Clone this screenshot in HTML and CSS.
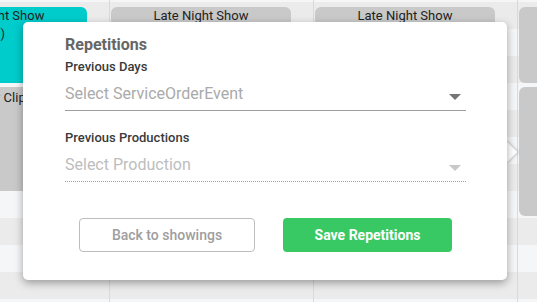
FILE: index.html
```html
<!DOCTYPE html>
<html lang="en">
<head>
    <meta charset="UTF-8">
    <meta name="viewport" content="width=device-width, initial-scale=1.0">
    <title>Repetitions</title>
    <link rel="stylesheet" href="styles.css">
</head>
<body>
    <div class="schedule">
        <div class="day first">
            <div class="show teal">
                Late Night Show<br>(1)
            </div>
            <div class="show clip">Show Clip</div>
        </div>
        <div class="day">
            <div class="show tall">Late Night Show</div>
        </div>
        <div class="day">
            <div class="show tall">Late Night Show</div>
        </div>
        <div class="day">
            <div class="show short"></div>
            <div class="show mid"></div>
        </div>
    </div>

    <span class="popup-arrow"></span>
    <div class="popup">
        <h3 class="popup-title">Repetitions</h3>
        <label class="field-label">Previous Days</label>
        <div class="select">
            <span>Select ServiceOrderEvent</span>
            <span class="caret"></span>
        </div>
        <label class="field-label gap">Previous Productions</label>
        <div class="select disabled">
            <span>Select Production</span>
            <span class="caret"></span>
        </div>
        <div class="actions">
            <button class="btn btn-back">Back to showings</button>
            <button class="btn btn-save">Save Repetitions</button>
        </div>
    </div>
</body>
</html>
```

FILE: styles.css
```css
body {
    margin: 0;
    width: 537px;
    height: 302px;
    overflow: hidden;
    font-family: Roboto, "Liberation Sans", sans-serif;
    background: #f5f6f8;
}
.schedule {
    display: flex;
    margin-left: -95px;
    height: 302px;
}
.day {
    flex: 0 0 204px;
    box-sizing: border-box;
    border-left: 1px solid #d9d9d9;
    padding: 7px 0 0 1px;
    background: repeating-linear-gradient(to bottom, #ebebeb 0, #ebebeb 27px, #f5f6f8 27px, #f5f6f8 54px);
    background-position: 0 2px;
}
.day.first {
    border-left: none;
    padding-left: 2px;
}
.show {
    width: 180px;
    box-sizing: border-box;
    margin-bottom: 4px;
    border-radius: 6px;
    background: #c9c9c9;
    color: #222;
    font-size: 13px;
    line-height: 18px;
    text-align: center;
}
.show.teal {
    background: #00cccb;
    height: 76px;
}
.show.clip {
    height: 104px;
    padding-top: 2px;
}
.show.tall {
    height: 160px;
}
.show.short {
    height: 76px;
}
.show.mid {
    height: 129px;
}

.popup {
    position: absolute;
    left: 23px;
    top: 22px;
    width: 484px;
    height: 258px;
    box-sizing: border-box;
    padding: 14px 41px 28px 42px;
    background: #fff;
    border-radius: 5px;
    box-shadow: 0 3px 9px rgba(0, 0, 0, 0.35);
}
.popup-arrow {
    position: absolute;
    left: 498px;
    top: 144px;
    width: 16px;
    height: 16px;
    background: #fff;
    transform: rotate(45deg);
    box-shadow: 1px -1px 3px rgba(0, 0, 0, 0.2);
}
.popup-title {
    margin: 0;
    font-size: 16px;
    line-height: 18px;
    font-weight: 700;
    color: #666;
}
.field-label {
    display: block;
    margin-top: 5px;
    font-size: 13px;
    line-height: 16px;
    font-weight: 500;
    color: #3a3a3a;
}
.field-label.gap {
    margin-top: 19px;
}
.select {
    display: flex;
    justify-content: space-between;
    margin-top: 10px;
    padding-bottom: 7px;
    border-bottom: 1px solid #9e9e9e;
    font-size: 16px;
    line-height: 18px;
    color: #aaa;
}
.caret {
    width: 0;
    height: 0;
    margin: 9px 5px 0 0;
    border-left: 6px solid transparent;
    border-right: 6px solid transparent;
    border-top: 6px solid #757575;
}
.select.disabled {
    border-bottom: 1px dotted #a0a0a0;
    color: #bdbdbd;
}
.select.disabled .caret {
    border-top-color: #c8c8c8;
}
.actions {
    display: flex;
    justify-content: center;
    gap: 28px;
    margin-top: 36px;
}
.btn {
    height: 34px;
    border-radius: 4px;
    font-family: Roboto, "Liberation Sans", sans-serif;
    font-size: 14px;
    cursor: pointer;
}
.btn-back {
    width: 176px;
    background: #fff;
    border: 1px solid #bdbdbd;
    color: #9e9e9e;
    font-weight: 500;
}
.btn-save {
    width: 169px;
    background: #38c965;
    border: none;
    color: #fff;
    font-weight: 700;
}
```
